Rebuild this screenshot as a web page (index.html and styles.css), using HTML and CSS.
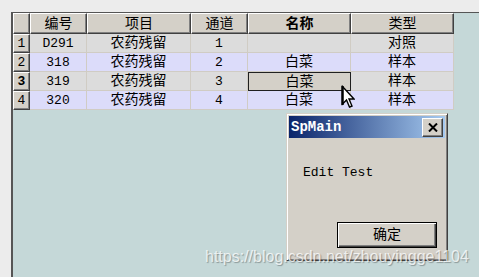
FILE: index.html
```html
<!DOCTYPE html>
<html lang="zh">
<head>
<meta charset="UTF-8">
<title>SpMain</title>
<link rel="stylesheet" href="styles.css">
</head>
<body>
<div class="frame">
	<div class="grid">
		<div class="hd corner"></div>
		<div class="hd">编号</div>
		<div class="hd">项目</div>
		<div class="hd">通道</div>
		<div class="hd cur">名称</div>
		<div class="hd">类型</div>

		<div class="rh">1</div>
		<div class="c odd num">D291</div>
		<div class="c odd">农药残留</div>
		<div class="c odd num">1</div>
		<div class="c odd"></div>
		<div class="c odd">对照</div>

		<div class="rh">2</div>
		<div class="c even num">318</div>
		<div class="c even">农药残留</div>
		<div class="c even num">2</div>
		<div class="c even">白菜</div>
		<div class="c even">样本</div>

		<div class="rh cur">3</div>
		<div class="c odd num">319</div>
		<div class="c odd">农药残留</div>
		<div class="c odd num">3</div>
		<div class="c sel">白菜</div>
		<div class="c odd">样本</div>

		<div class="rh">4</div>
		<div class="c even num">320</div>
		<div class="c even">农药残留</div>
		<div class="c even num">4</div>
		<div class="c even">白菜</div>
		<div class="c even">样本</div>
	</div>
</div>

<svg class="cursor" width="14" height="24" viewBox="0 0 14 24">
	<path d="M1.5 1.5 L1.5 19 L5.5 15 L8.5 22 L11 21 L8 14 L13 14 Z" fill="#fff" stroke="#000" stroke-width="1.4"/>
	<path d="M1.5 1 L1.5 20" stroke="#000" stroke-width="2.4"/>
</svg>

<div class="dialog">
	<div class="title">
		<span>SpMain</span>
		<div class="close">
			<svg width="10" height="9" viewBox="0 0 10 9"><path d="M1 0.5 L9 8.5 M9 0.5 L1 8.5" stroke="#000" stroke-width="2"/></svg>
		</div>
	</div>
	<div class="body">
		<div class="msg">Edit Test</div>
		<div class="btn">确定</div>
	</div>
</div>

<div class="mark">https://blog.csdn.net/zhouyingge1104</div>
</body>
</html>
```

FILE: styles.css
```css
body{margin:0;background:#ececec;overflow:hidden;height:277px;position:relative;font-family:"Liberation Mono","Noto Sans CJK SC",monospace;font-size:14px;color:#000;}
.frame{margin:12px 0 0 11px;height:264px;background:#c5d8d8;border-left:2px solid #555;border-top:1px solid #555;}
.grid{display:grid;grid-template-columns:17px 57px 104px 57px 103px 103px;grid-template-rows:21px repeat(4,19px);width:441px;}
.hd,.rh{box-sizing:border-box;background:#d4d0c8;border:1px solid;border-color:#fff #404040 #404040 #fff;box-shadow:inset -1px -1px #808080;display:flex;align-items:center;justify-content:center;line-height:1;}
.hd.cur{font-weight:bold;}
.rh{font-size:13px;}
.rh.cur{font-weight:bold;}
.c{box-sizing:border-box;border-right:1px solid #d0ccc4;border-bottom:1px solid #d0ccc4;display:flex;align-items:center;justify-content:center;line-height:1;}
.odd{background:#dcdcdc;}
.even{background:#dcdcfa;}
.num{font-size:13px;}
.c.sel{background:#d4d0c8;border:1px solid #202020;}

.cursor{position:absolute;left:341px;top:85px;}

.dialog{position:absolute;left:286px;top:113px;width:162px;height:148px;box-sizing:border-box;background:#d4d0c8;border:1px solid;border-color:#d4d0c8 #404040 #404040 #d4d0c8;box-shadow:inset 1px 1px #fff,inset -1px -1px #808080;padding:2px;display:flex;flex-direction:column;}
.title{height:22px;background:linear-gradient(to right,#0a246a,#a6caf0);display:flex;align-items:center;justify-content:space-between;padding:0 2px 0 2px;color:#fff;font-weight:bold;font-size:14px;}
.close{width:21px;height:19px;box-sizing:border-box;background:#d4d0c8;border:1px solid;border-color:#fff #404040 #404040 #fff;box-shadow:inset -1px -1px #808080;display:flex;align-items:center;justify-content:center;}
.close svg{display:block;}
.body{flex:1;display:flex;flex-direction:column;padding:0 8px 10px 14px;}
.msg{font-size:13px;line-height:15px;margin-top:27px;}
.btn{margin-top:auto;align-self:flex-end;width:100px;height:26px;box-sizing:border-box;border:1px solid #000;box-shadow:inset 1px 1px #fff,inset -1px -1px #404040,inset -2px -2px #808080;display:flex;align-items:center;justify-content:center;line-height:1;}

.mark{position:absolute;left:205px;top:248px;font-family:"Liberation Sans",Arial,sans-serif;font-size:16px;color:rgba(255,255,255,0.75);text-shadow:1px 1px 1px rgba(0,0,0,0.3);white-space:nowrap;}
```
